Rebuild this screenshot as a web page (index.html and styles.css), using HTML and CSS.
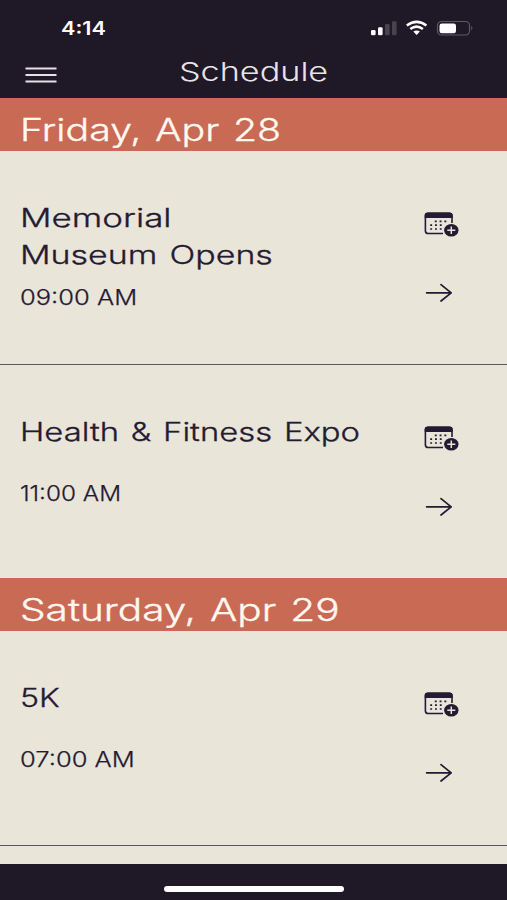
FILE: index.html
```html
<!DOCTYPE html>
<html lang="en">
<head>
<meta charset="utf-8">
<title>Schedule</title>
<link rel="stylesheet" href="styles.css">
</head>
<body>
<svg class="defs" width="0" height="0" aria-hidden="true">
  <symbol id="calendar" viewBox="0 0 36 27">
    <path d="M28 12V4.700Q28 2.300 25.200 2.300H4.200Q1.400 2.300 1.400 4.700V19.900Q1.400 22.500 4.400 22.500H19" fill="none" stroke="#241a31" stroke-width="1.600"/>
    <path d="M.7 7V4.500Q.7 1.500 4.200 1.500H25.200Q28.600 1.500 28.600 4.500V7Z" fill="#241a31"/>
    <path d="M10.800 10.400H24M6.200 14.200H20M6.200 18H18" fill="none" stroke="#241a31" stroke-width="1.700" stroke-dasharray="1.900 2.900"/>
    <ellipse cx="27.300" cy="19.200" rx="7.200" ry="6.300" fill="#241a31"/>
    <path d="M23.300 19.200H31.300M27.300 15.500V22.900" stroke="#e9e5d9" stroke-width="1.500"/>
  </symbol>
  <symbol id="arrow" viewBox="0 0 28 20">
    <path d="M2.600 9.800H27.200M17 1.600L27.200 9.800L17 18" fill="none" stroke="#241a31" stroke-width="1.700" stroke-linecap="round" stroke-linejoin="round"/>
  </symbol>
</svg>
<div class="app">
  <header class="top">
    <div class="status">
      <span class="clock"><span class="t t-clock">4:14</span></span>
      <svg class="indicators" width="104" height="20" viewBox="0 0 104 20">
        <g fill="#fff">
          <rect x="1" y="11" width="4.600" height="5.200" rx="1.300"/>
          <rect x="8" y="8.300" width="4.600" height="7.900" rx="1.300"/>
          <g fill="#494350"><rect x="15" y="5" width="4.600" height="11.200" rx="1.300"/><rect x="22" y="2.300" width="4.600" height="13.900" rx="1.300"/></g>
          <path d="M43.300 12.600Q46.600 10.600 49.900 12.600L46.600 15.900Z"/>
        </g>
        <path d="M36.800 6.600Q46.600 -.8 56.400 6.600M40.300 10Q46.600 5.200 52.900 10" fill="none" stroke="#fff" stroke-width="2.500"/>
        <rect x="67.500" y="2.500" width="32" height="13.500" rx="4" fill="none" stroke="#5e5865" stroke-width="1.200"/>
        <rect x="69.500" y="4.500" width="16.500" height="9.700" rx="2.300" fill="#fff"/>
        <path d="M101.300 7Q103.500 9.200 101.300 11.500Z" fill="#6b6572"/>
      </svg>
    </div>
    <div class="nav">
      <svg class="menu" width="32" height="18" viewBox="0 0 32 18"><path d="M.5 2.500H31.500M.5 9H31.500M.5 15.500H31.500" stroke="#e6dfe6" stroke-width="2"/></svg>
      <h1><span class="t t-page">Schedule</span></h1>
    </div>
  </header>
  <main>
    <h2 class="day"><span class="t t-fri">Friday, Apr 28</span></h2>
    <section class="event">
      <div class="info">
        <h3><span class="t t-memorial">Memorial</span><span class="t t-museum">Museum Opens</span></h3>
        <p><span class="t t-nine">09:00 AM</span></p>
      </div>
      <div class="actions"><svg class="cal"><use href="#calendar"/></svg><svg class="go"><use href="#arrow"/></svg></div>
    </section>
    <section class="event last">
      <div class="info">
        <h3><span class="t t-health">Health &amp; Fitness Expo</span></h3>
        <p><span class="t t-eleven">11:00 AM</span></p>
      </div>
      <div class="actions"><svg class="cal"><use href="#calendar"/></svg><svg class="go"><use href="#arrow"/></svg></div>
    </section>
    <h2 class="day"><span class="t t-sat">Saturday, Apr 29</span></h2>
    <section class="event">
      <div class="info">
        <h3><span class="t t-5k">5K</span></h3>
        <p><span class="t t-seven">07:00 AM</span></p>
      </div>
      <div class="actions"><svg class="cal"><use href="#calendar"/></svg><svg class="go"><use href="#arrow"/></svg></div>
    </section>
  </main>
  <footer><div class="home"></div></footer>
</div>
</body>
</html>
```
FILE: styles.css
```css
* { box-sizing: border-box; margin: 0; padding: 0; }
body { background: #e9e5d9; color: #241a31; font-family: Inter, "Open Sans", sans-serif; }
.defs { display: none; }
.app { display: flex; flex-direction: column; height: 900px; overflow: hidden; }
.top { height: 98px; flex: none; background: #1f1826; color: #e9e3e9; }
.status { display: flex; justify-content: space-between; padding: 19px 33px 0 61px; height: 52px; }
.clock { font-size: 18px; font-weight: 600; line-height: 19px; color: #fff; }
.nav { display: flex; align-items: center; height: 40px; padding-left: 25px; }
.menu { margin-top: 5px; }
h1 { margin-left: 122px; font-size: 26px; font-weight: 300; line-height: 40px; }

/* Wide letterforms: each label is stretched horizontally from its left edge */
.t { display: block; width: max-content; white-space: nowrap; transform-origin: 0 50%; }
.t-clock { transform: scaleX(1.2); }
.t-page { transform: scaleX(1.315); }
.t-fri { transform: scaleX(1.269); }
.t-sat { transform: scaleX(1.308); }
.t-memorial { transform: scaleX(1.372); }
.t-museum { transform: scaleX(1.331); }
.t-health { transform: scaleX(1.287); }
.t-5k { transform: scaleX(1.26); }
.t-nine { transform: scaleX(1.187); }
.t-eleven { transform: scaleX(1.13); }
.t-seven { transform: scaleX(1.187); }

main { flex: 1; }
.day { height: 53px; padding: 9px 0 0 20px; background: #c96a55; color: #fff8f0; font-size: 31px; font-weight: 300; line-height: 46px; word-spacing: 2px; -webkit-text-stroke: .35px; }
.event { display: flex; justify-content: space-between; height: 214px; padding: 48px 47px 0 20px; border-bottom: 1px solid #5c5660; }
.event.last { height: 213px; border-bottom: 0; }
.day ~ .day + .event { height: 215px; }
h3 { min-height: 56px; font-size: 25.500px; font-weight: 300; line-height: 37.300px; word-spacing: 2px; -webkit-text-stroke: .3px; }
.info p { margin-top: 9.500px; font-size: 21.500px; font-weight: 300; line-height: 28px; -webkit-text-stroke: .25px; }
.actions { display: flex; flex-direction: column; width: 36px; padding-top: 12px; gap: 45px; }
.cal { width: 36px; height: 27px; }
.go { width: 28px; height: 20px; }
footer { height: 36px; flex: none; background: #1f1826; display: flex; justify-content: center; padding: 22px 0 0 1px; }
.home { width: 180px; height: 6px; border-radius: 3px; background: #fff; }
```
